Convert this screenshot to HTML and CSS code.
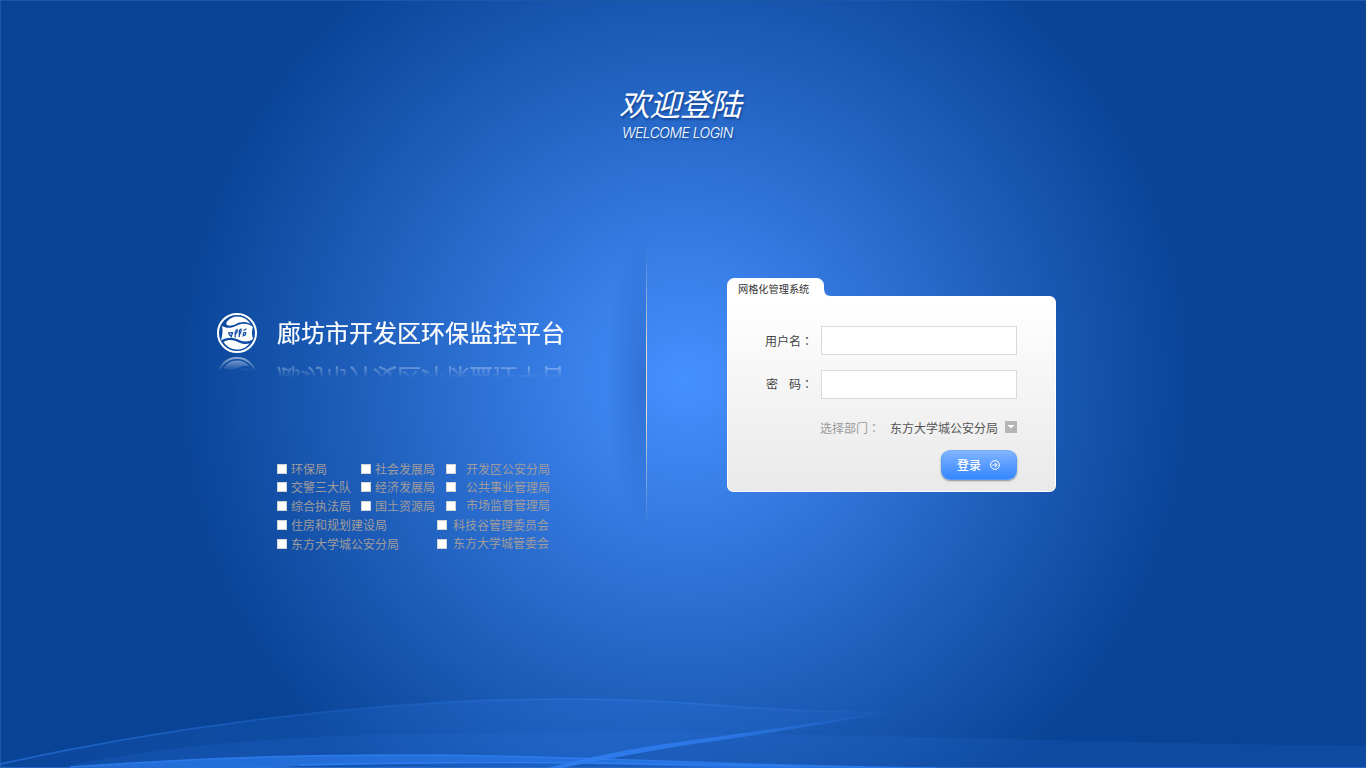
FILE: index.html
```
<!DOCTYPE html>
<html lang="zh-CN">
<head>
<meta charset="utf-8">
<title>欢迎登陆</title>
<link rel="stylesheet" href="styles.css">
</head>
<body>
<div class="page">
  <svg class="waves" viewBox="0 0 1366 88" aria-hidden="true">
    <defs>
      <linearGradient id="veil" x1="0" x2="1"><stop offset="0" stop-color="#2f7cec" stop-opacity=".08"/><stop offset=".65" stop-color="#2f7cec" stop-opacity=".24"/><stop offset="1" stop-color="#2f7cec" stop-opacity=".08"/></linearGradient>
      <linearGradient id="edge" x1="0" x2="1"><stop offset="0" stop-color="#2e7df0" stop-opacity=".6"/><stop offset=".4" stop-color="#2e7df0" stop-opacity=".2"/><stop offset=".8" stop-color="#2e7df0" stop-opacity=".4"/><stop offset="1" stop-color="#2e7df0" stop-opacity="0"/></linearGradient>
      <linearGradient id="beam" x1="0" x2="1"><stop offset="0" stop-color="#2f7df0"/><stop offset=".5" stop-color="#2f7df0" stop-opacity=".75"/><stop offset="1" stop-color="#2f7df0" stop-opacity=".1"/></linearGradient>
      <pattern id="mesh" width="5" height="5" patternUnits="userSpaceOnUse" patternTransform="rotate(20)"><path d="M0 0L5 5" stroke="#0a439a" stroke-opacity=".14" fill="none"/></pattern>
    </defs>
    <path d="M0 84C180 44 390 19 560 19C690 18 735 32 890 32C790 47 690 64 550 88H0Z" fill="url(#veil)"/>
    <path d="M110 70C250 36 400 22 560 20C690 20 735 33 850 34C770 47 690 64 550 84H120Z" fill="url(#mesh)"/>
    <path d="M70 85C260 47 480 53 680 53C900 55 1120 63 1366 66V88H70Z" fill="#2d7bea" fill-opacity=".15"/>
    <path d="M0 84C180 44 390 19 560 19C690 18 735 32 890 32" stroke="url(#edge)" stroke-width="1.6" fill="none"/>
    <path d="M70 87C240 75 340 75 430 75C590 76 760 87 935 88H720Q510 79 300 86L270 88Z" fill="#2875e3" fill-opacity=".8"/>
    <path d="M70 87C240 75 340 75 430 75C590 76 760 87 935 88M300 85Q540 79 800 87" stroke="#307ff2" stroke-width="1.4" stroke-opacity=".8" fill="none"/>
    <path d="M548 88Q620 69 683 61.500Q790 47 890 32Q790 51 690 64.500Q630 74 562 88Z" fill="url(#beam)"/>
  </svg>

  <header class="welcome">
    <h1 class="welcome-title">欢迎登陆</h1>
    <p class="welcome-sub">WELCOME LOGIN</p>
  </header>

  <main class="content">
    <section class="intro">
      <div class="brand">
        <svg class="logo" viewBox="0 0 40 40" aria-hidden="true">
          <circle cx="20" cy="20" r="19" fill="none" stroke="#fff" stroke-width="2"/>
          <path d="M10.500 8C14 4.500 17 3.500 20 3.500C26 3.500 31 6.500 33.500 11C28 8 23 9 18.500 11.200C14.500 13 10.800 13.200 9.700 11.500C9 10 9.500 9 10.500 8Z" fill="#fff"/>
          <path d="M5 13C10 16 15 14.700 20 12.400C26 9.700 31 10.500 36 14C34.500 18 34.500 21 36 26C31 29.500 26 29 21 26.500C15 23.700 9.500 24.200 4 27.500C5.500 22 6 18 5 13Z" fill="#fff"/>
          <path d="M6.500 29C12 25.800 17 26.800 22 29.500C26 31.300 30 31.300 32.500 30.500C29 35 24.500 36.500 20 36.500C14 36.500 9.500 33.500 6.500 29Z" fill="#fff"/>
          <g fill="none" stroke="#174fa8" stroke-width="1.300"><path d="M11 20L15.500 19.700L14.300 23.500L11.800 21"/><path d="M18.200 24.500V19.500Q18.500 17 20.200 16.500Q20.700 19 18.800 21M22.300 24V18Q22.500 16.500 24 16Q24.500 19.500 22.600 21.500"/><path d="M26.500 17.500L29.500 15.800M26.500 20Q30 18 28.200 22L26.300 22.700Z"/></g>
        </svg>
        <h2 class="brand-name">廊坊市开发区环保监控平台</h2>
      </div>

      <div class="departments">
        <div class="row three">
          <label class="dept"><i class="box"></i>环保局</label>
          <label class="dept"><i class="box"></i>社会发展局</label>
          <label class="dept wide"><i class="box"></i>开发区公安分局</label>
        </div>
        <div class="row three">
          <label class="dept"><i class="box"></i>交警三大队</label>
          <label class="dept"><i class="box"></i>经济发展局</label>
          <label class="dept wide"><i class="box"></i>公共事业管理局</label>
        </div>
        <div class="row three">
          <label class="dept"><i class="box"></i>综合执法局</label>
          <label class="dept"><i class="box"></i>国土资源局</label>
          <label class="dept wide"><i class="box"></i><span class="raised">市场监督管理局</span></label>
        </div>
        <div class="row two">
          <label class="dept"><i class="box"></i>住房和规划建设局</label>
          <label class="dept medium"><i class="box"></i>科技谷管理委员会</label>
        </div>
        <div class="row two">
          <label class="dept"><i class="box"></i>东方大学城公安分局</label>
          <label class="dept medium"><i class="box"></i><span class="raised">东方大学城管委会</span></label>
        </div>
      </div>
    </section>

    <div class="divider"></div>

    <form class="card">
      <svg class="card-shape" viewBox="0 0 329 214" aria-hidden="true">
        <defs><linearGradient id="paper" x1="0" y1="0" x2="0" y2="1"><stop offset=".1" stop-color="#fff"/><stop offset="1" stop-color="#e9e9e9"/></linearGradient></defs>
        <path d="M.5 8Q.5.5 8 .5H89Q96.500.5 96.500 8V11Q97 18.500 104 18.500H322Q328.500 18.500 328.500 25V207Q328.500 213.500 322 213.500H7Q.5 213.500.5 207Z" fill="url(#paper)" stroke="#fff"/>
      </svg>
      <div class="card-tab">网格化管理系统</div>
      <div class="card-body">
        <div class="field"><label class="field-label" for="user">用户名<span class="colon" lang="zh-TW">：</span></label><input class="input" id="user" type="text"></div>
        <div class="field"><label class="field-label password-label" for="pass"><span class="spaced">密</span>码<span class="colon" lang="zh-TW">：</span></label><input class="input" id="pass" type="password"></div>
        <div class="select-row">
          <span class="select-label">选择部门<span class="colon" lang="zh-TW">：</span></span>
          <span class="select-value">东方大学城公安分局</span>
          <svg class="arrow" viewBox="0 0 12 12" aria-hidden="true"><path d="M0 0H12V12H0Z" fill="#b5b5b5"/><path d="M2.500 4H9.500L6 7.500Z" fill="#fff"/></svg>
        </div>
        <button class="submit" type="button"><span class="submit-text">登录</span><svg class="go" viewBox="0 0 10 10" aria-hidden="true"><circle cx="5" cy="5" r="4.400"/><path d="M2.500 5H7M5 3L7.200 5L5 7"/></svg></button>
      </div>
    </form>
  </main>
</div>
</body>
</html>
```
FILE: styles.css
```
* { box-sizing: border-box; }

body {
  margin: 0;
  font-family: "Noto Sans CJK SC", sans-serif;
  font-size: 12px;
  overflow: hidden;
}

.page {
  position: relative;
  height: 768px;
  padding-top: 82px;
  background: radial-gradient(circle 515px at 685px 380px, #4690ff 0, #084395 100%);
  box-shadow: inset 1px 1px 0 #1d58a8, inset 0 -1px 0 #2464c0;
}

.waves {
  position: absolute;
  left: 0;
  bottom: 0;
  width: 1366px;
  height: 88px;
}

.welcome {
  width: 140px;
  height: 140px;
  margin-left: 619px;
  color: #fff;
  font-style: italic;
  text-shadow: 1px 2px 2px rgba(0, 30, 90, .45);
  white-space: nowrap;
}

.welcome-title {
  margin: 0;
  font-size: 31px;
  line-height: 42px;
  font-weight: 400;
  letter-spacing: -.5px;
}

.welcome-sub {
  margin: 0 0 0 3px;
  font-family: Inter, "Liberation Sans", sans-serif;
  font-size: 14px;
  font-weight: 300;
  line-height: 18px;
  letter-spacing: -.55px;
}

.content {
  display: grid;
  grid-template-columns: 430px 80px 329px;
  margin-left: 217px;
}

.intro { padding-top: 91px; }

.brand {
  display: flex;
  gap: 20px;
  height: 42px;
}

.logo {
  flex: none;
  width: 40px;
  height: 40px;
  -webkit-box-reflect: below 4px linear-gradient(transparent 65%, rgba(255, 255, 255, .55));
}

.brand-name {
  margin: 0;
  height: 42px;
  color: #fff;
  font-size: 24px;
  font-weight: 400;
  line-height: 38px;
  white-space: nowrap;
  -webkit-text-stroke: .2px #fff;
  -webkit-box-reflect: below 1px linear-gradient(transparent 48%, rgba(255, 255, 255, .65));
}

.departments {
  display: grid;
  grid-template-rows: 18px 19px 19px 19px 18px;
  margin: 105px 0 0 60px;
  color: #a19c9b;
  line-height: 18px;
}

.row { display: grid; }
.three { grid-template-columns: 84px 85px 110px; }
.two { grid-template-columns: 160px 120px; }

.dept {
  display: flex;
  align-items: center;
  gap: 4px;
  height: 18px;
  white-space: nowrap;
}

.wide { gap: 10px; }
.medium { gap: 6px; }
.raised { padding-bottom: 2px; }

.box {
  flex: none;
  width: 10px;
  height: 10px;
  background: #fff;
  border: 1px solid #d3d3d3;
}

.divider {
  width: 60px;
  height: 320px;
  margin-left: -60px;
  background:
    linear-gradient(transparent 8%, #e6ddd0 40%, #e6ddd0 60%, transparent 95%) right / 1px 100% no-repeat,
    radial-gradient(ellipse 42px 150px at right center, rgba(27, 85, 175, .5), transparent);
}

.card {
  position: relative;
  width: 329px;
  height: 214px;
  margin-top: 56px;
}

.card-shape {
  position: absolute;
  width: 329px;
  height: 214px;
}

.card-tab,
.card-body { position: relative; }

.card-tab {
  height: 18px;
  padding: 2px 0 0 11px;
  color: #333;
  font-size: 10.200px;
  line-height: 18px;
}

.card-body { padding: 30px 0 0 38px; }

.field {
  display: grid;
  grid-template-columns: 56px 196px;
  height: 44px;
}

.field-label {
  color: #444;
  font-size: 12px;
  line-height: 29px;
  white-space: nowrap;
}

.password-label { line-height: 27px; padding-left: 1px; }

.colon { font-family: "Noto Sans CJK TC", sans-serif; }

.spaced { margin-right: 11px; }

.input {
  width: 196px;
  height: 29px;
  padding: 0 6px;
  background: #fff;
  border: 1px solid #dadada;
  border-radius: 0;
}

.select-row {
  display: flex;
  align-items: center;
  width: 252px;
  height: 18px;
  margin-top: 4px;
  padding-left: 55px;
  white-space: nowrap;
}

.select-label { width: 70px; color: #999; padding-top: 1px; }
.select-value { width: 108px; color: #555; }
.arrow { width: 12px; height: 12px; margin-left: 7px; }

.submit {
  display: flex;
  align-items: center;
  gap: 9px;
  width: 76px;
  height: 30px;
  margin: 14px 0 0 176px;
  padding: 0 0 0 15px;
  border: 1px solid #559bf8;
  border-top-color: #7bb0fb;
  border-radius: 9px;
  background: linear-gradient(#80b4ff, #3486ff);
  box-shadow: 0 1px 2px rgba(0, 0, 0, .4);
  color: #fff;
  font: 500 12px "Noto Sans CJK SC", sans-serif;
}

.submit-text { padding-bottom: 2px; }

.go {
  width: 10px;
  height: 10px;
  fill: none;
  stroke: #fff;
  stroke-width: 1;
}
```
